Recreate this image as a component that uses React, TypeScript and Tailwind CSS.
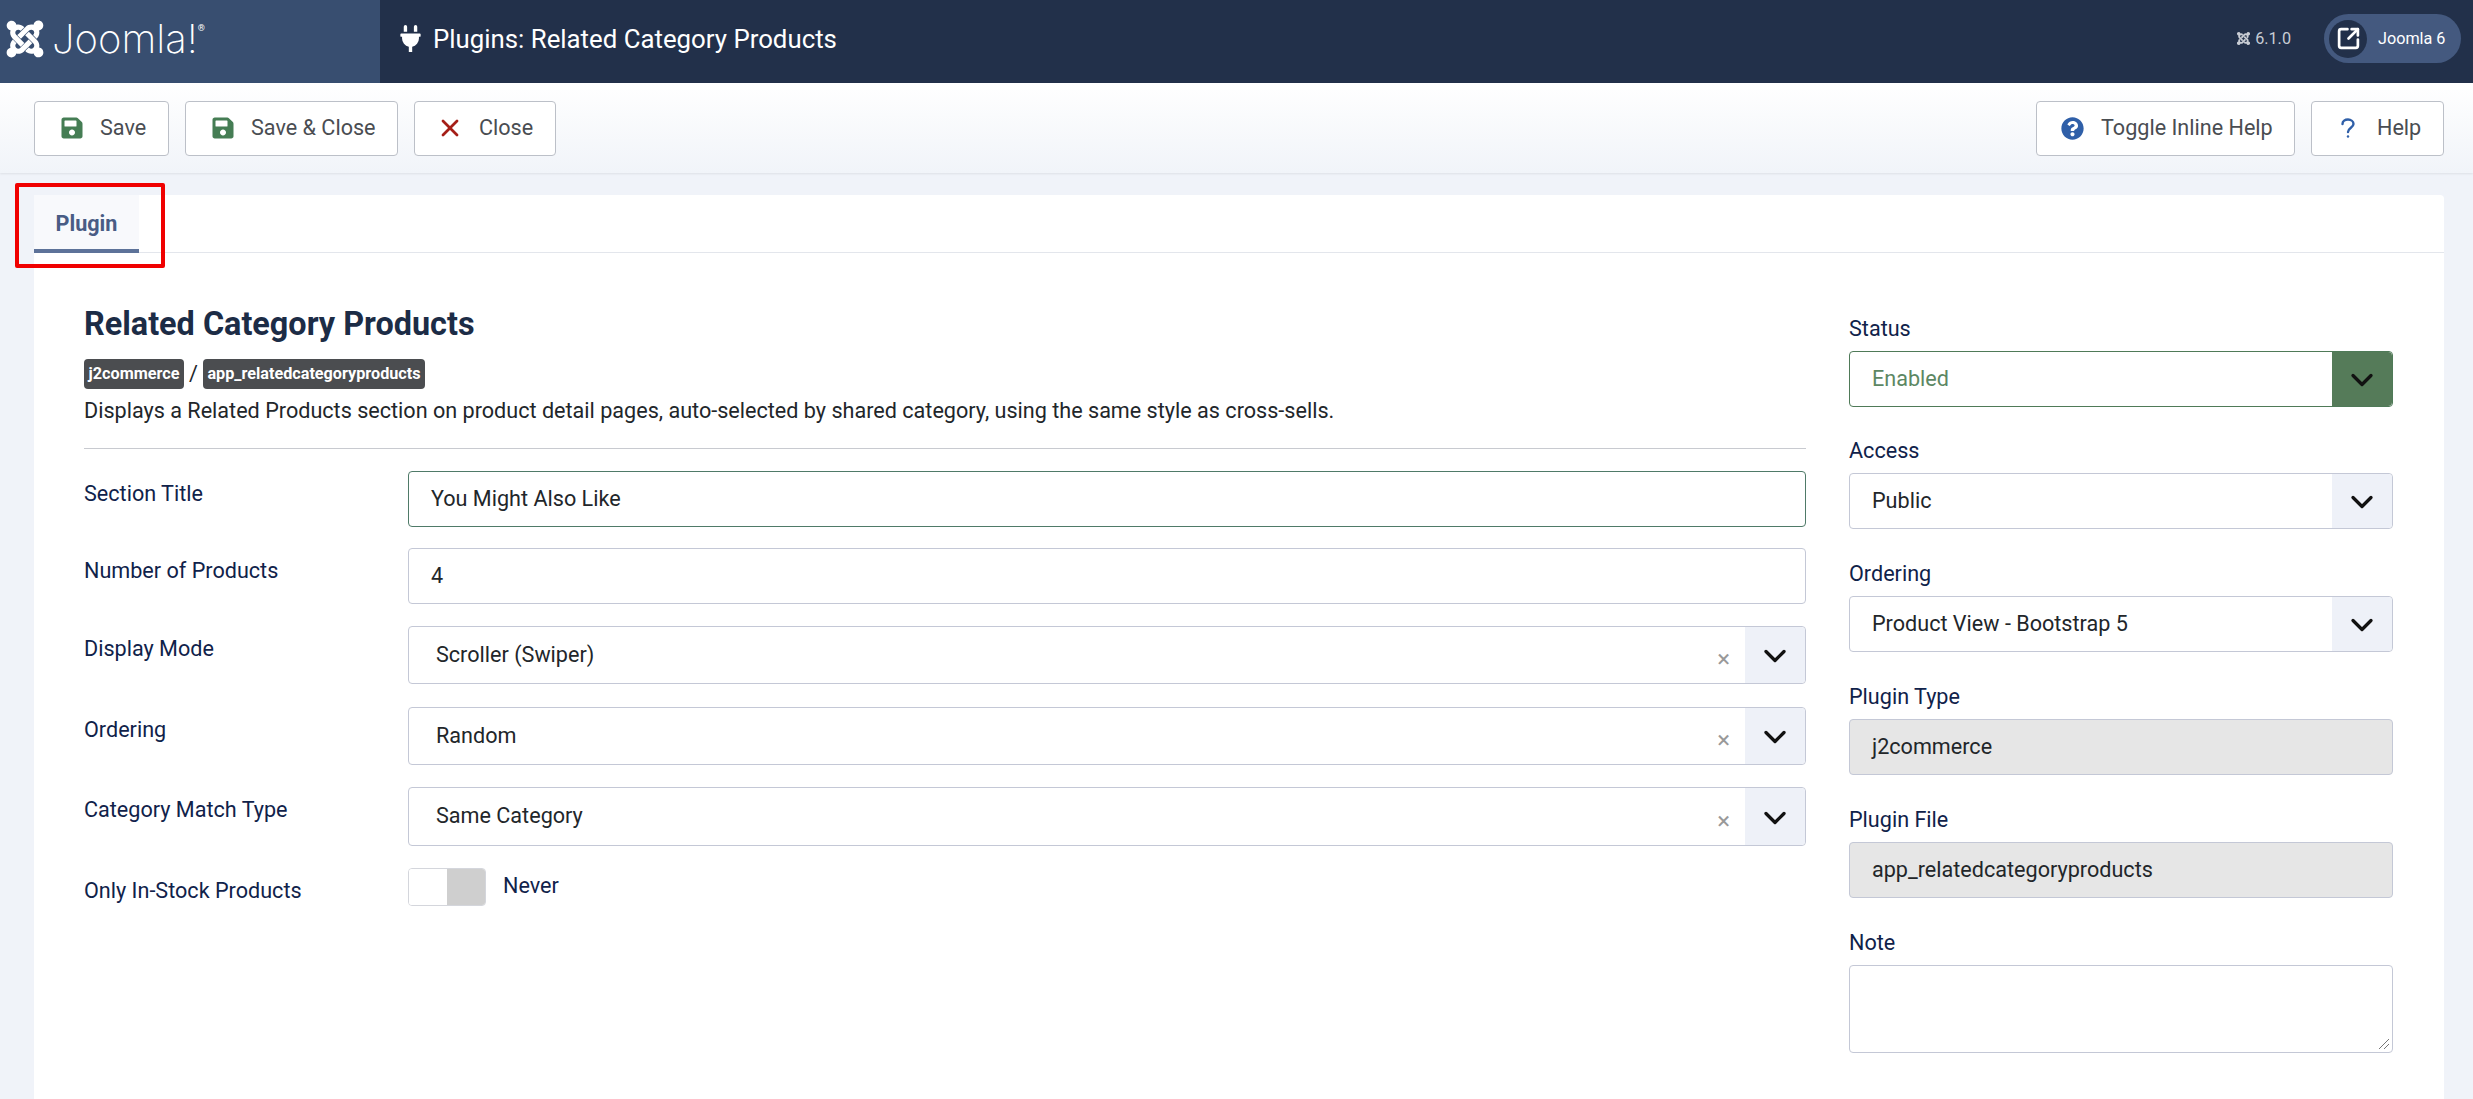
import { ChevronDown, SquareArrowOutUpRight, X } from 'lucide-react';
import { FaJoomla, FaPlug, FaQuestionCircle, FaSave } from 'react-icons/fa';

const fieldRows = [
  { label: 'Display Mode', value: 'Scroller (Swiper)', rowClass: 'mt-[22px] h-[58px]' },
  { label: 'Ordering', value: 'Random', rowClass: 'mt-[23px] h-[58px]' },
  { label: 'Category Match Type', value: 'Same Category', rowClass: 'mt-[22px] h-[59px]' },
];

function ToolbarButton({ icon, label, className }: { icon: React.ReactNode; label: string; className: string }) {
  return (
    <button className={`flex h-[55px] items-center rounded-[4px] border border-[#bcc0c8] bg-white text-[21.6px] text-[#4a4d52] ${className}`}>
      {icon}
      <span>{label}</span>
    </button>
  );
}

function FieldRow({ label, className, children }: { label: string; className: string; children: React.ReactNode }) {
  return (
    <div className={`flex ${className}`}>
      <label className="w-[324px] shrink-0 pt-[11px] text-[21.6px] leading-6 text-[#10224a]">{label}</label>
      <div className="min-w-0 flex-1">{children}</div>
    </div>
  );
}

function FancySelect({ value }: { value: string }) {
  return (
    <div className="flex h-full items-center rounded-[4px] border border-[#c4c8d6] bg-white">
      <span className="flex-1 pl-[27px] text-[21.6px] text-[#22262a]">{value}</span>
      <span className="mr-[15px] mt-[8px] text-[24px] leading-none text-[#999]">×</span>
      <span className="flex h-full w-[60px] items-center justify-center rounded-r-[4px] bg-[#eef1f8] pt-[2px]">
        <ChevronDown size={36} strokeWidth={2.2} className="text-[#111]" />
      </span>
    </div>
  );
}

function SideSelect({ value, enabled }: { value: string; enabled?: boolean }) {
  return (
    <div className={`flex h-[56px] items-center rounded-[4px] border bg-white ${enabled ? 'border-[#4f7a58]' : 'border-[#c4c8d6]'}`}>
      <span className={`flex-1 pl-[22px] text-[21.6px] ${enabled ? 'text-[#5c8763]' : 'text-[#22262a]'}`}>{value}</span>
      <span className={`flex h-full w-[60px] items-center justify-center rounded-r-[4px] pt-[2px] ${enabled ? 'bg-[#557b59]' : 'bg-[#eef1f8]'}`}>
        <ChevronDown size={36} strokeWidth={2.2} className="text-[#111]" />
      </span>
    </div>
  );
}

function SideField({ label, className, children }: { label: string; className: string; children: React.ReactNode }) {
  return (
    <div className={className}>
      <div className="mb-[10px] text-[21.6px] leading-6 text-[#10224a]">{label}</div>
      {children}
    </div>
  );
}

function ReadOnlyField({ value }: { value: string }) {
  return (
    <div className="flex h-[56px] items-center rounded-[4px] border border-[#c4c8d6] bg-[#e6e6e6] pl-[22px] text-[21.6px] text-[#22262a]">
      {value}
    </div>
  );
}

export default function App() {
  return (
    <div className="flex h-screen flex-col overflow-hidden bg-[#f0f3f9] font-['Roboto',sans-serif]">
      <header className="flex h-[83px] shrink-0 items-center bg-[#22304a] text-white">
        <div className="flex h-full w-[380px] items-center bg-[#384e70] pb-[6px] pl-[4px]">
          <FaJoomla size={42} />
          <span className="ml-[6px] font-['Inter',sans-serif] text-[40px] font-extralight leading-none">Joomla!</span>
          <span className="-mt-[20px] text-[9px] leading-none">®</span>
        </div>
        <div className="ml-[17px] flex items-center gap-[9px]">
          <FaPlug size={27} className="mb-[6px]" />
          <h1 className="pb-[4px] text-[25.8px] font-normal">Plugins: Related Category Products</h1>
        </div>
        <div className="ml-auto flex items-center pb-[6px] pr-[12px]">
          <div className="flex items-center gap-[4px] text-[16.2px] text-[#c8ccd4]">
            <FaJoomla size={15} />
            <span className="pt-[2px]">6.1.0</span>
          </div>
          <div className="ml-[33px] flex h-[49px] w-[137px] items-center rounded-full bg-[#44597f] pl-[5px]">
            <span className="flex h-[38px] w-[38px] shrink-0 items-center justify-center rounded-full bg-[#22304a]">
              <SquareArrowOutUpRight size={25} strokeWidth={2.6} />
            </span>
            <span className="ml-[11px] whitespace-nowrap pt-[2px] text-[16.2px]">Joomla 6</span>
          </div>
        </div>
      </header>

      <div className="flex h-[90px] shrink-0 items-center justify-between bg-gradient-to-b from-white to-[#f1f4f9] pl-[34px] pr-[29px] shadow-[0_1px_2px_rgba(0,0,0,0.08)]">
        <div className="flex gap-[16px]">
          <ToolbarButton className="w-[135px] pl-[25px]" icon={<FaSave size={24} className="mr-[16px] text-[#457d54]" />} label="Save" />
          <ToolbarButton className="w-[213px] pl-[25px]" icon={<FaSave size={24} className="mr-[16px] text-[#457d54]" />} label="Save & Close" />
          <ToolbarButton className="w-[142px] pl-[21px]" icon={<X size={28} strokeWidth={2.4} className="mr-[15px] text-[#a51f18]" />} label="Close" />
        </div>
        <div className="flex gap-[16px]">
          <ToolbarButton className="w-[259px] pl-[24px]" icon={<FaQuestionCircle size={23} className="mr-[17px] text-[#2f5fa8]" />} label="Toggle Inline Help" />
          <ToolbarButton
            className="w-[133px] pl-[29px]"
            icon={
              <svg viewBox="0 0 14 20" className="mr-[22px] h-[20px] w-[14px] text-[#2f5fa8]" fill="none" stroke="currentColor" strokeWidth="2.4" strokeLinecap="round">
                <path d="M1.5 6C1.5 3 4 1.5 7 1.5s5.5 2 5.5 4.5C12.5 9.5 7 10 7 14" />
                <path d="M7 18.4v.1" />
              </svg>
            }
            label="Help"
          />
        </div>
      </div>

      <main className="relative flex-1 pl-[34px] pr-[29px] pt-[22px]">
        <div className="h-full rounded-t-[4px] bg-white">
          <div className="flex h-[58px] border-b border-[#e3e6ec]">
            <div className="flex h-[58px] w-[105px] items-center justify-center border-b-[4px] border-[#5d7299] bg-[#f8f9fc] pt-[4px] text-[21.6px] font-bold text-[#495c85]">
              Plugin
            </div>
          </div>

          <div className="flex pl-[50px] pr-[51px]">
            <section className="w-[1722px] shrink-0">
              <h2 className="mt-[53px] text-[32.4px] font-bold leading-[36px] text-[#1c2c46]">Related Category Products</h2>
              <div className="mt-[17px] flex h-[30px] items-center">
                <span className="flex h-[30px] w-[100px] items-center justify-center rounded-[4px] bg-[#4b4d50] text-[16.2px] font-bold text-white">j2commerce</span>
                <span className="w-[19px] text-center text-[21.6px] text-[#22262a]">/</span>
                <span className="flex h-[30px] w-[222px] items-center justify-center rounded-[4px] bg-[#4b4d50] text-[16.2px] font-bold text-white">app_relatedcategoryproducts</span>
              </div>
              <p className="mt-[10px] text-[21.6px] leading-6 text-[#22262a]">
                Displays a Related Products section on product detail pages, auto-selected by shared category, using the same style as cross-sells.
              </p>
              <hr className="mt-[25px] border-t border-[#c8cad0]" />

              <FieldRow label="Section Title" className="mt-[22px] h-[56px]">
                <div className="flex h-full items-center rounded-[4px] border border-[#4f7a68] pl-[22px] text-[21.6px] text-[#22262a]">You Might Also Like</div>
              </FieldRow>
              <FieldRow label="Number of Products" className="mt-[21px] h-[56px]">
                <div className="flex h-full items-center rounded-[4px] border border-[#c4c8d6] pl-[22px] text-[21.6px] text-[#22262a]">4</div>
              </FieldRow>
              {fieldRows.map((row) => (
                <FieldRow key={row.label} label={row.label} className={row.rowClass}>
                  <FancySelect value={row.value} />
                </FieldRow>
              ))}
              <FieldRow label="Only In-Stock Products" className="mt-[22px] h-[38px]">
                <div className="flex items-center">
                  <div className="flex h-[38px] w-[78px] overflow-hidden rounded-[4px] border border-[#d4d6dc]">
                    <span className="w-[38px] bg-white" />
                    <span className="flex-1 bg-[#cfcfcf]" />
                  </div>
                  <span className="mb-[2px] ml-[17px] text-[21.6px] text-[#10224a]">Never</span>
                </div>
              </FieldRow>
            </section>

            <aside className="ml-[43px] flex-1">
              <SideField label="Status" className="mt-[64px]"><SideSelect value="Enabled" enabled /></SideField>
              <SideField label="Access" className="mt-[32px]"><SideSelect value="Public" /></SideField>
              <SideField label="Ordering" className="mt-[33px]"><SideSelect value="Product View - Bootstrap 5" /></SideField>
              <SideField label="Plugin Type" className="mt-[33px]"><ReadOnlyField value="j2commerce" /></SideField>
              <SideField label="Plugin File" className="mt-[33px]"><ReadOnlyField value="app_relatedcategoryproducts" /></SideField>
              <SideField label="Note" className="mt-[33px]">
                <div className="relative h-[88px] rounded-[4px] border border-[#c4c8d6] bg-white">
                  <svg viewBox="0 0 12 12" className="absolute bottom-[2px] right-[2px] h-[12px] w-[12px] text-[#777]" fill="none" stroke="currentColor" strokeWidth="1">
                    <path d="M1 11 11 1M6 11l5-5" />
                  </svg>
                </div>
              </SideField>
            </aside>
          </div>
        </div>

        {/* red annotation round the tab */}
        <div className="absolute left-[15px] top-[10px] h-[85px] w-[150px] rounded-[2px] border-[4px] border-[#f00000]" />
      </main>
    </div>
  );
}
